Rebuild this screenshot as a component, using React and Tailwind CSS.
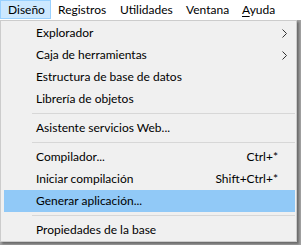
const font = "font-['Lato','Liberation_Sans',sans-serif]";

function Item({ label, shortcut, sub, active }) {
    return (
        <div className={`h-[22px] flex items-center pl-[32px] pr-[17px] ${active ? 'bg-[#91c9f7]' : ''}`}>
            <span className="flex-1 whitespace-nowrap">{label}</span>
            {shortcut && <span className="whitespace-nowrap">{shortcut}</span>}
            {sub && (
                <svg width="5" height="9" viewBox="0 0 5 9" className="mr-[-9px]">
                    <path d="M0.5 0.5 L4.5 4.5 L0.5 8.5" fill="none" stroke="#333" strokeWidth="1" />
                </svg>
            )}
        </div>
    );
}

function Sep() {
    return (
        <div className="h-[7px] pt-[3px] pl-[28px]">
            <div className="h-px bg-[#d7d7d7]" />
        </div>
    );
}

export default function App() {
    return (
        <div className={`w-[301px] h-[245px] bg-[#a3a3a3] overflow-hidden text-[12px] text-black leading-none ${font}`}>
            <div className="h-[20px] bg-white flex items-start">
                <div className="w-[51px] h-[19px] pl-[7px] pt-[1px] flex items-center bg-[#cce8ff] border border-[#99d1ff]">Diseño</div>
                <div className="w-[62px] h-[19px] pl-[7px] pt-[1px] flex items-center">Registros</div>
                <div className="w-[66px] h-[19px] pl-[7px] pt-[1px] flex items-center">Utilidades</div>
                <div className="w-[56px] h-[19px] pl-[7px] pt-[1px] flex items-center">Ventana</div>
                <div className="h-[19px] pl-[7px] pt-[1px] flex items-center">
                    <span><span className="underline underline-offset-2">A</span>yuda</span>
                </div>
                <div className="flex-1" />
            </div>
            <div className="w-[297px] h-[222px] bg-[#f0f0f0] border border-[#cccccc] pt-[1px] pl-[3px] pr-[1px] shadow-[2px_2px_2px_rgba(0,0,0,0.35)]">
                <Item label="Explorador" sub />
                <Item label="Caja de herramientas" sub />
                <Item label="Estructura de base de datos" />
                <Item label="Librería de objetos" />
                <Sep />
                <Item label="Asistente servicios Web..." />
                <Sep />
                <Item label="Compilador..." shortcut="Ctrl+*" />
                <Item label="Iniciar compilación" shortcut="Shift+Ctrl+*" />
                <Item label="Generar aplicación..." active />
                <Sep />
                <Item label="Propiedades de la base" />
            </div>
        </div>
    );
}
